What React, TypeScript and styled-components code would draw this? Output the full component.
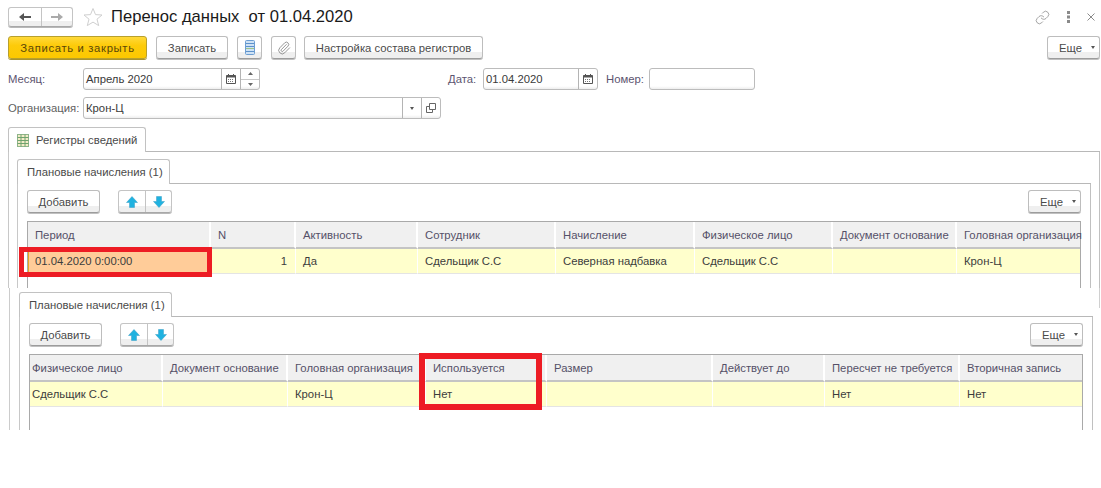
import React from 'react'
import styled, { createGlobalStyle } from 'styled-components'
import { Link, Paperclip } from 'lucide-react'

const GlobalStyle = createGlobalStyle`
  html, body {
    margin: 0;
    padding: 0;
    background: #fff;
  }
  body {
    font-family: "Liberation Sans", Arial, sans-serif;
    font-size: 11.3px;
    color: #444;
  }
`

const Page = styled.div`
  position: relative;
  width: 1101px;
  height: 488px;
  overflow: hidden;
  background: #fff;
`

const TopShot = styled.section`
  height: 288px;
  overflow: hidden;
`

const BottomShot = styled.section`
  box-sizing: border-box;
  height: 142px;
  margin-left: 9px;
  padding: 4px 8px 0 9px;
  border-left: 1px solid #ccc;
  overflow: hidden;
`

const Header = styled.header`
  display: flex;
  align-items: center;
  height: 20px;
  margin: 7px 0 9px;
  padding: 0 6px 0 8px;
`

const Segmented = styled.div`
  display: flex;
  height: ${p => p.$height || 20}px;
  box-sizing: border-box;
  border: 1px solid #c4c4c4;
  border-bottom-color: #a8a8a8;
  border-radius: 3px;
  background: linear-gradient(#fff 0, #fff 72%, #efefef 72%, #efefef 100%);
  box-shadow: 0 1px 0 #b8b8b8;
`

const SegmentButton = styled.span`
  display: flex;
  align-items: center;
  justify-content: center;
  width: ${p => p.$width}px;
  & + & {
    border-left: 1px solid #c4c4c4;
  }
`

const StarBox = styled.span`
  display: flex;
  margin-left: 10px;
`

const Title = styled.h1`
  margin: 0 0 0 8px;
  font-size: 16.6px;
  font-weight: 400;
  color: #1a1a1a;
  white-space: pre;
`

const HeaderTools = styled.div`
  display: flex;
  align-items: center;
  gap: 17px;
  margin-left: auto;
  color: #6e6e6e;
`

const CommandBar = styled.div`
  display: flex;
  align-items: stretch;
  height: 23px;
  margin-bottom: 9px;
  padding: 0 1px 0 8px;
`

const Button = styled.button`
  display: flex;
  align-items: center;
  justify-content: center;
  gap: 7px;
  box-sizing: border-box;
  width: ${p => p.$width}px;
  height: 23px;
  margin: 0 ${p => p.$gap ?? 9}px 0 0;
  padding: 0;
  border: 1px solid #bdbdbd;
  border-bottom-color: #9c9c9c;
  border-radius: 3px;
  background: linear-gradient(#fff 0, #fff 72%, #efefef 72%, #efefef 100%);
  box-shadow: 0 1px 0 #c0c0c0;
  font: 11.3px "Liberation Sans", Arial, sans-serif;
  color: #4a4a4a;
`

const PrimaryButton = styled(Button)`
  border-color: #b8a02c;
  background: linear-gradient(#ffd93a 0, #fdcb0a 40%, #fcc800 100%);
  box-shadow: 0 1px 0 #a89430;
  letter-spacing: 0.65px;
  color: #5a4708;
`

const MoreButton = styled(Button)`
  gap: 9px;
  margin: 0 0 0 auto;
  padding-left: 7px;
`

const Caret = styled.i`
  display: block;
  width: 0;
  height: 0;
  border-left: 2.5px solid transparent;
  border-right: 2.5px solid transparent;
  border-top: 3px solid #555;
`

const FormRow = styled.div`
  display: flex;
  align-items: center;
  height: 22px;
  margin-bottom: ${p => p.$gap}px;
  padding-left: 8px;
`

const FieldLabel = styled.label`
  width: ${p => p.$width}px;
  margin-left: ${p => p.$offset || 0}px;
  color: ${p => p.$tone || '#5c5470'};
  white-space: nowrap;
`

const Field = styled.div`
  display: flex;
  box-sizing: border-box;
  width: ${p => p.$width}px;
  height: 22px;
  border: 1px solid #bcbcbc;
  border-radius: 3px;
  background: linear-gradient(#fff 0, #fff 85%, #eee 100%);
`

const FieldValue = styled.span`
  flex: 1;
  padding-left: 2px;
  line-height: 20px;
  color: #3a3a3a;
`

const FieldAddon = styled.span`
  display: flex;
  align-items: center;
  justify-content: center;
  width: ${p => p.$width}px;
  border-left: 1px solid #b4b4b4;
`

const Spinner = styled.span`
  display: flex;
  flex-direction: column;
  width: 18px;
  border-left: 1px solid #b4b4b4;
`

const SpinnerPart = styled.span`
  flex: 1;
  display: flex;
  align-items: center;
  justify-content: center;
  & + & {
    border-top: 1px solid #c8c8c8;
  }
`

const TabRow = styled.div`
  display: flex;
  height: 25px;
`

const Tab = styled.div`
  display: flex;
  align-items: center;
  gap: 7px;
  box-sizing: border-box;
  width: ${p => p.$width}px;
  padding-left: ${p => p.$pad}px;
  border: 1px solid #c2c2c2;
  border-bottom: none;
  border-radius: 3px 3px 0 0;
  color: #4a4a4a;
  white-space: nowrap;
`

const TabLine = styled.div`
  flex: 1;
  border-bottom: 1px solid #b8b8b8;
`

const OuterTabs = styled.div`
  margin: 8px 1px 0 8px;
`

const OuterPanel = styled.div`
  height: 300px;
  padding: 7px 8px 0;
  border-left: 1px solid #c8c8c8;
  border-right: 1px solid #c0c0c0;
`

const InnerPanel = styled.div`
  padding: 6px 9px 0;
  border-left: 1px solid #c8c8c8;
  border-right: 1px solid #c0c0c0;
`

const GridBar = styled.div`
  display: flex;
  align-items: flex-start;
  height: 23px;
  margin-bottom: 8px;
`

const ArrowGroup = styled(Segmented)`
  margin-left: 9px;
`

const GridBox = styled.div`
  height: 90px;
  border: 1px solid #a9a9a9;
  border-bottom: none;
`

const GridRow = styled.div`
  display: grid;
  grid-template-columns: ${p => p.$columns};
`

const HeadCell = styled.div`
  box-sizing: border-box;
  height: 27px;
  padding-left: ${p => p.$pad}px;
  border-right: 2px solid #fff;
  border-bottom: 2px solid #c4c4c4;
  background: #f0f0f0;
  line-height: 26px;
  color: #555068;
  white-space: nowrap;
  &:last-child {
    border-right: none;
  }
`

const BodyCell = styled.div`
  box-sizing: border-box;
  height: 25px;
  padding: 0 ${p => (p.$right ? 8 : 0)}px 0 ${p => p.$pad}px;
  border-right: 1px solid #fff;
  border-bottom: 1px solid #e4e4e4;
  box-shadow: ${p => (p.$selected ? 'inset 1px 0 0 #e8a820' : 'none')};
  background: ${p => (p.$selected ? '#ffcc99' : '#ffffcc')};
  line-height: 25px;
  text-align: ${p => (p.$right ? 'right' : 'left')};
  color: #3c3c3c;
  white-space: nowrap;
  &:last-child {
    border-right: none;
  }
`

const RedFrame = styled.div`
  position: absolute;
  box-sizing: border-box;
  border: ${p => p.$stroke}px solid #ed1c24;
  pointer-events: none;
`

const PeriodFrame = styled(RedFrame)`
  left: 19px;
  top: 247px;
  width: 193px;
  height: 30px;
`

const UsedFrame = styled(RedFrame)`
  left: 419px;
  top: 353px;
  width: 123px;
  height: 57px;
`

// the outer panel's edge sticks out past the pasted lower picture
const EdgeStub = styled.div`
  position: absolute;
  left: 1099px;
  top: 288px;
  width: 1px;
  height: 20px;
  background: #d0d0d0;
`

const BackIcon = ({ color }: { color: string }) => (
  <svg width="12" height="10" viewBox="0 0 12 10">
    <path d="M0 5 5 1V4H12V6H5V9Z" fill={color} />
  </svg>
)

const ForwardIcon = ({ color }: { color: string }) => (
  <svg width="12" height="10" viewBox="0 0 12 10">
    <path d="M12 5 7 1V4H0V6H7V9Z" fill={color} />
  </svg>
)

const StarIcon = () => (
  <svg width="20" height="20" viewBox="0 0 20 20">
    <path
      d="M10 1.5 12.5 7.6 19 8 14 12.2 15.7 18.6 10 15.1 4.3 18.6 6 12.2 1 8 7.5 7.6Z"
      fill="#fff"
      stroke="#cfcfcf"
    />
  </svg>
)

const CloseIcon = () => (
  <svg width="8" height="8" viewBox="0 0 8 8">
    <path d="M.5.5 7.5 7.5M7.5.5.5 7.5" stroke="#8a8a8a" fill="none" />
  </svg>
)

const DotsIcon = () => (
  <svg width="3" height="12" viewBox="0 0 3 12">
    <rect x="0" y="0" width="3" height="3" fill="#8a8a8a" />
    <rect x="0" y="4.5" width="3" height="3" fill="#8a8a8a" />
    <rect x="0" y="9" width="3" height="3" fill="#8a8a8a" />
  </svg>
)

const DocIcon = () => (
  <svg width="10" height="15" viewBox="0 0 10 15">
    <rect x=".5" y=".5" width="9" height="14" rx="1" fill="#cfe2f5" stroke="#6d9ed2" />
    <path d="M1 3.5H9M1 6.5H9M1 11.5H9" stroke="#5e93cc" />
    <path d="M1 8.5H9" stroke="#9cc48a" />
  </svg>
)

const CalendarIcon = () => (
  <svg width="10" height="10" viewBox="0 0 10 10">
    <path d="M.5 1.5H9.5V9.5H.5Z" fill="#fff" stroke="#555" />
    <path d="M.5 2.5H9.5" stroke="#555" strokeWidth="2" />
    <path d="M2.5 0V2M7.5 0V2" stroke="#555" />
    <path d="M2 5.5H8M2 7.5H8" stroke="#777" strokeDasharray="1 1" />
  </svg>
)

const SmallUp = () => (
  <svg width="5" height="3" viewBox="0 0 5 3">
    <path d="M2.5 0 5 3H0Z" fill="#666" />
  </svg>
)

const SmallDown = () => (
  <svg width="5" height="3" viewBox="0 0 5 3">
    <path d="M2.5 3 5 0H0Z" fill="#666" />
  </svg>
)

const OpenIcon = () => (
  <svg width="10" height="10" viewBox="0 0 10 10">
    <path d="M3.5.5H9.5V6.5H3.5Z" fill="#fff" stroke="#666" />
    <path d="M3.5 3.5H.5V9.5H6.5V6.5" fill="none" stroke="#666" />
  </svg>
)

const TableIcon = () => (
  <svg width="12" height="13" viewBox="0 0 12 13">
    <rect x=".5" y=".5" width="11" height="12" fill="#f3ecc8" stroke="#8fb58a" />
    <path d="M.5 3.5H11.5M.5 6.5H11.5M.5 9.5H11.5M4 .5V12.5M8 .5V12.5" stroke="#6fa36f" />
  </svg>
)

const UpIcon = () => (
  <svg width="12" height="12" viewBox="0 0 12 12">
    <path d="M6 .5 11.5 6.5H8.5V11.5H3.5V6.5H.5Z" fill="#1fb2e0" stroke="#3a9fc4" strokeWidth=".5" />
  </svg>
)

const DownIcon = () => (
  <svg width="12" height="12" viewBox="0 0 12 12">
    <path d="M6 11.5 11.5 5.5H8.5V.5H3.5V5.5H.5Z" fill="#1fb2e0" stroke="#3a9fc4" strokeWidth=".5" />
  </svg>
)

interface Column {
  title: string
  width: number
  value?: string
  selected?: boolean
  right?: boolean
  pad?: number
}

const topColumns: Column[] = [
  { title: 'Период', width: 183, value: '01.04.2020 0:00:00', selected: true },
  { title: 'N', width: 85, value: '1', right: true },
  { title: 'Активность', width: 122, value: 'Да' },
  { title: 'Сотрудник', width: 138, value: 'Сдельщик С.С' },
  { title: 'Начисление', width: 139, value: 'Северная надбавка' },
  { title: 'Физическое лицо', width: 138, value: 'Сдельщик С.С' },
  { title: 'Документ основание', width: 124 },
  { title: 'Головная организация', width: 123, value: 'Крон-Ц' },
]

const bottomColumns: Column[] = [
  { title: 'Физическое лицо', width: 133, value: 'Сдельщик С.С', pad: 2 },
  { title: 'Документ основание', width: 125 },
  { title: 'Головная организация', width: 138, value: 'Крон-Ц' },
  { title: 'Используется', width: 121, value: 'Нет' },
  { title: 'Размер', width: 166 },
  { title: 'Действует до', width: 112 },
  { title: 'Пересчет не требуется', width: 135, value: 'Нет' },
  { title: 'Вторичная запись', width: 122, value: 'Нет' },
]

const DataGrid = ({ columns }: { columns: Column[] }) => {
  const template = columns.map(c => `${c.width}px`).join(' ')
  return (
    <GridBox>
      <GridRow $columns={template}>
        {columns.map(c => (
          <HeadCell key={c.title} $pad={c.pad ?? 7}>
            {c.title}
          </HeadCell>
        ))}
      </GridRow>
      <GridRow $columns={template}>
        {columns.map(c => (
          <BodyCell key={c.title} $pad={c.pad ?? 7} $selected={c.selected} $right={c.right}>
            {c.value}
          </BodyCell>
        ))}
      </GridRow>
    </GridBox>
  )
}

const GridToolbar = () => (
  <GridBar>
    <Button $width={73}>Добавить</Button>
    <ArrowGroup $height={23}>
      <SegmentButton $width={26}>
        <UpIcon />
      </SegmentButton>
      <SegmentButton $width={25}>
        <DownIcon />
      </SegmentButton>
    </ArrowGroup>
    <MoreButton $width={53}>
      Еще <Caret />
    </MoreButton>
  </GridBar>
)

const App = () => (
  <Page>
    <GlobalStyle />
    <TopShot>
      <Header>
        <Segmented>
          <SegmentButton $width={32}>
            <BackIcon color="#555" />
          </SegmentButton>
          <SegmentButton $width={30}>
            <ForwardIcon color="#aaa" />
          </SegmentButton>
        </Segmented>
        <StarBox>
          <StarIcon />
        </StarBox>
        <Title>Перенос данных  от 01.04.2020</Title>
        <HeaderTools>
          <Link size={15} strokeWidth={1} />
          <DotsIcon />
          <CloseIcon />
        </HeaderTools>
      </Header>

      <CommandBar>
        <PrimaryButton $width={139}>Записать и закрыть</PrimaryButton>
        <Button $width={72}>Записать</Button>
        <Button $width={25}>
          <DocIcon />
        </Button>
        <Button $width={25} $gap={8}>
          <Paperclip size={14} strokeWidth={1.3} color="#777" />
        </Button>
        <Button $width={179}>Настройка состава регистров</Button>
        <MoreButton $width={53}>
          Еще <Caret />
        </MoreButton>
      </CommandBar>

      <FormRow $gap={7}>
        <FieldLabel $width={75}>Месяц:</FieldLabel>
        <Field $width={177}>
          <FieldValue>Апрель 2020</FieldValue>
          <FieldAddon $width={18}>
            <CalendarIcon />
          </FieldAddon>
          <Spinner>
            <SpinnerPart>
              <SmallUp />
            </SpinnerPart>
            <SpinnerPart>
              <SmallDown />
            </SpinnerPart>
          </Spinner>
        </Field>
        <FieldLabel $width={35} $offset={188}>
          Дата:
        </FieldLabel>
        <Field $width={115}>
          <FieldValue>01.04.2020</FieldValue>
          <FieldAddon $width={18}>
            <CalendarIcon />
          </FieldAddon>
        </Field>
        <FieldLabel $width={43} $offset={8}>
          Номер:
        </FieldLabel>
        <Field $width={106} />
      </FormRow>

      <FormRow $gap={0}>
        <FieldLabel $width={75} $tone="#5f5f5f">
          Организация:
        </FieldLabel>
        <Field $width={358}>
          <FieldValue>Крон-Ц</FieldValue>
          <FieldAddon $width={18}>
            <Caret />
          </FieldAddon>
          <FieldAddon $width={18}>
            <OpenIcon />
          </FieldAddon>
        </Field>
      </FormRow>

      <OuterTabs>
        <TabRow>
          <Tab $width={138} $pad={8}>
            <TableIcon />
            Регистры сведений
          </Tab>
          <TabLine />
        </TabRow>
        <OuterPanel>
          <TabRow>
            <Tab $width={153} $pad={9}>
              Плановые начисления (1)
            </Tab>
            <TabLine />
          </TabRow>
          <InnerPanel>
            <GridToolbar />
            <DataGrid columns={topColumns} />
          </InnerPanel>
        </OuterPanel>
      </OuterTabs>
    </TopShot>

    <BottomShot>
      <TabRow>
        <Tab $width={153} $pad={9}>
          Плановые начисления (1)
        </Tab>
        <TabLine />
      </TabRow>
      <InnerPanel>
        <GridToolbar />
        <DataGrid columns={bottomColumns} />
      </InnerPanel>
    </BottomShot>

    <PeriodFrame $stroke={5} />
    <UsedFrame $stroke={6} />
    <EdgeStub />
  </Page>
)

export default App
